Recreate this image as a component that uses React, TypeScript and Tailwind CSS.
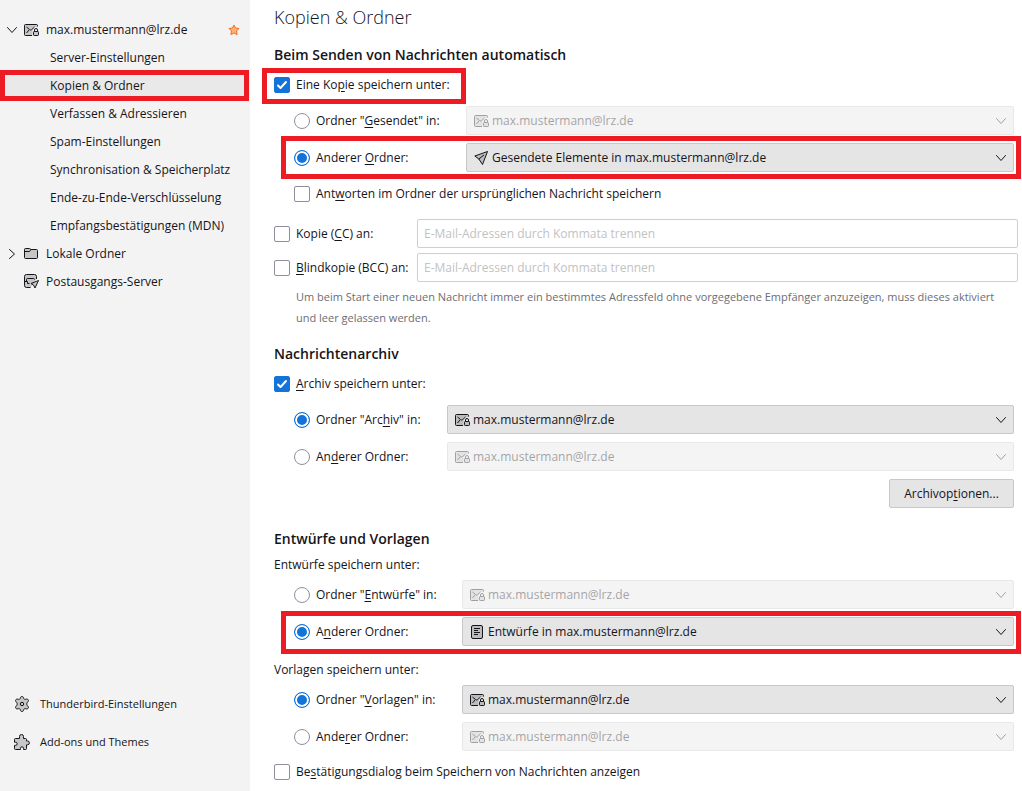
import * as React from "react"
import clsx from "clsx"

type IconProps = { className?: string }

function MailLockIcon({ className }: IconProps) {
  return (
    <svg viewBox="0 0 16 16" fill="none" stroke="currentColor" className={clsx("size-4", className)} aria-hidden="true">
      <path d="M1.500 2.500h11a1 1 0 0 1 1 1V5h-3L8.500 7v6.500h-7a1 1 0 0 1-1-1v-9a1 1 0 0 1 1-1z" fill="currentColor" fillOpacity=".2" stroke="none" />
      <path d="M8 13.500H1.500a1 1 0 0 1-1-1v-9a1 1 0 0 1 1-1h11a1 1 0 0 1 1 1v1" />
      <path d="M2.500 5l3 2.500c.8.600 1.500.600 2.300 0L10.500 5M2.500 11 5 8" />
      <rect x="9.500" y="9.500" width="5" height="4" rx=".8" fill="currentColor" fillOpacity=".2" />
      <path d="M10.500 9.500V8a1.500 1.500 0 0 1 3 0v1.500" />
    </svg>
  )
}

function FolderIcon({ className }: IconProps) {
  return (
    <svg viewBox="0 0 16 16" fill="none" stroke="currentColor" className={clsx("size-4", className)} aria-hidden="true">
      <path
        d="M.5 3.500a1 1 0 0 1 1-1h4l1.500 1h5.500a1 1 0 0 1 1 1v7a1 1 0 0 1-1 1h-11a1 1 0 0 1-1-1z"
        fill="currentColor"
        fillOpacity=".2"
      />
      <path d="M.5 5.500h5l1.500-2" />
    </svg>
  )
}

function OutgoingIcon({ className }: IconProps) {
  return (
    <svg viewBox="0 0 16 16" fill="none" stroke="currentColor" strokeLinejoin="round" className={clsx("size-4", className)} aria-hidden="true">
      <path d="M6.500 13.500h-4a2 2 0 0 1-2-2v-9a2 2 0 0 1 2-2h8a2 2 0 0 1 2 2V5" fill="currentColor" fillOpacity=".2" />
      <path d="M2.500 7V5.500a1 1 0 0 1 1-1h6a1 1 0 0 1 1 1M.5 7.500h3v2h2" />
      <path d="M14.500 6.500l-7.500 3 2.500 1.500 1.500 3z" fill="currentColor" fillOpacity=".2" />
    </svg>
  )
}

function PlaneIcon({ className }: IconProps) {
  return (
    <svg viewBox="0 0 16 16" fill="none" stroke="currentColor" strokeLinejoin="round" className={clsx("size-4", className)} aria-hidden="true">
      <path d="M13.500 1.500.8 6l4 3 3.700 5.500z" fill="currentColor" fillOpacity=".2" />
      <path d="M4.800 9 10 5" />
    </svg>
  )
}

function DraftIcon({ className }: IconProps) {
  return (
    <svg viewBox="0 0 16 16" fill="none" stroke="currentColor" className={clsx("size-4", className)} aria-hidden="true">
      <rect x="1.500" y="1.500" width="11" height="13" rx="1.500" fill="currentColor" fillOpacity=".2" />
      <path d="M4 4.500h6M4 6.500h4M4 8.500h6M4 10.500h4" />
    </svg>
  )
}

function GearIcon({ className }: IconProps) {
  return (
    <svg viewBox="0 0 16 16" fill="none" stroke="currentColor" strokeLinejoin="round" className={clsx("size-4", className)} aria-hidden="true">
      <path
        d="M6.200 2.500C6.600 1 7 .5 8 .5s1.400.500 1.800 2c.3.700.9 1 1.700.8 1.500-.4 2.200-.300 2.700.6s.2 1.500-.9 2.600c-.7.700-.7 2.300 0 3 1.100 1.100 1.400 1.700.9 2.600s-1.200 1-2.700.6c-.8-.2-1.400.1-1.700.8-.4 1.500-.8 2-1.800 2s-1.400-.5-1.800-2c-.3-.7-.9-1-1.700-.8-1.500.4-2.200.3-2.700-.6s-.2-1.500.9-2.600c.7-.7.7-2.300 0-3C1.600 5.400 1.300 4.800 1.800 3.900s1.200-1 2.700-.6c.8.200 1.400-.1 1.700-.8z"
        fill="currentColor"
        fillOpacity=".2"
      />
      <circle cx="8" cy="8" r="1.700" />
    </svg>
  )
}

function PuzzleIcon({ className }: IconProps) {
  return (
    <svg viewBox="0 0 16 16" fill="none" stroke="currentColor" strokeLinejoin="round" className={clsx("size-4", className)} aria-hidden="true">
      <path
        d="M5.500 4.500V2.500a2 2 0 1 1 4 0v2h2a1 1 0 0 1 1 1v1.500h1a1.900 1.900 0 1 1 0 3.800h-1v3.700a1 1 0 0 1-1 1H9.500v-1.200a1.500 1.500 0 0 0-3 0v1.200h-5a1 1 0 0 1-1-1v-3.200h1.200a1.500 1.500 0 1 0 0-3H.5V5.500a1 1 0 0 1 1-1z"
        fill="currentColor"
        fillOpacity=".2"
      />
    </svg>
  )
}

function StarIcon({ className }: IconProps) {
  return (
    <svg viewBox="0 0 12 12" strokeLinejoin="round" className={clsx("size-3", className)} aria-hidden="true">
      <path
        d="M6 1l1.500 3 3.500.500-2.500 2.500.600 3.600L6 9 2.900 10.600l.600-3.600L1 4.500 4.500 4z"
        fill="#ffb27a"
        stroke="#f07020"
      />
    </svg>
  )
}

function Chevron({ className }: IconProps) {
  return (
    <svg viewBox="0 0 12 12" fill="none" stroke="currentColor" strokeLinecap="round" className={clsx("size-3", className)} aria-hidden="true">
      <path d="M1.500 3.500 6 8.500l4.500-5" />
    </svg>
  )
}

function Highlight({ className }: { className: string }) {
  return <span className={clsx("pointer-events-none absolute border-5 border-[#ed1c24]", className)} />
}

// The letter after the underscore is the access key
function KeyLabel({ text }: { text: string }) {
  const [before, after] = text.split("_")
  return (
    <span>
      {before}
      <span className="underline underline-offset-2">{after.charAt(0)}</span>
      {after.slice(1)}
    </span>
  )
}

type CheckProps = { label: string; checked?: boolean; className?: string }

function Check({ label, checked, className }: CheckProps) {
  return (
    <label className={clsx("flex items-center gap-1.5 whitespace-nowrap", className)}>
      <span className="grid">
        <input
          type="checkbox"
          defaultChecked={checked}
          className="peer col-start-1 row-start-1 size-4 appearance-none rounded-xs border border-[#8f8f9d] bg-white checked:border-[#1373d9] checked:bg-[#1373d9]"
        />
        <svg
          viewBox="0 0 16 16"
          fill="none"
          stroke="white"
          strokeWidth="2"
          strokeLinecap="round"
          strokeLinejoin="round"
          className="pointer-events-none invisible col-start-1 row-start-1 size-4 peer-checked:visible"
          aria-hidden="true"
        >
          <path d="M4 8.500l2.500 2.500L12 5" />
        </svg>
      </span>
      <KeyLabel text={label} />
    </label>
  )
}

type FolderRowProps = {
  group: string
  label: string
  value: string
  selected?: boolean
  columns: string
  icon?: React.ReactNode
  highlight?: string
}

function FolderRow({ group, label, value, selected, columns, icon, highlight }: FolderRowProps) {
  return (
    <div className={clsx("relative mr-2 ml-5 grid items-center", columns)}>
      <label className="flex items-center gap-1.5 whitespace-nowrap">
        <input
          type="radio"
          name={group}
          defaultChecked={selected}
          className="size-4 appearance-none rounded-full border border-[#8f8f9d] bg-white checked:border-[#1373d9] checked:bg-[#1373d9] checked:shadow-[inset_0_0_0_2px_#fff]"
        />
        <KeyLabel text={label} />
      </label>
      <div className={clsx("relative", !selected && "opacity-40")}>
        <select
          aria-label={label.replace("_", "")}
          disabled={!selected}
          className="block h-[29px] w-full appearance-none rounded-xs border border-[#c8c8ca] bg-[#e5e5e5] pt-px pr-8 pl-[25px] opacity-100"
        >
          <option>{value}</option>
        </select>
        <span className="pointer-events-none absolute inset-y-0 left-2 flex items-center">
          {icon ?? <MailLockIcon />}
        </span>
        <Chevron className="pointer-events-none absolute inset-y-0 right-[7px] my-auto" />
      </div>
      {highlight && <Highlight className={highlight} />}
    </div>
  )
}

function AddressRow({ label, name }: { label: string; name: string }) {
  return (
    <div className="mr-1 grid grid-cols-[143px_1fr] items-center">
      <Check label={label} />
      <input
        type="text"
        aria-label={name}
        placeholder="E-Mail-Adressen durch Kommata trennen"
        className="h-[29px] w-full rounded-xs border border-[#cfcfd1] bg-white px-1.5 placeholder:text-[#c2c2c4]"
      />
    </div>
  )
}

const accountPages = [
  "Server-Einstellungen",
  "Kopien & Ordner",
  "Verfassen & Adressieren",
  "Spam-Einstellungen",
  "Synchronisation & Speicherplatz",
  "Ende-zu-Ende-Verschlüsselung",
  "Empfangsbestätigungen (MDN)",
]

function Sidebar() {
  return (
    <nav className="flex w-[250px] shrink-0 flex-col bg-[#f3f3f3] pt-4 pb-[30px]">
      <div className="flex h-7 items-center pr-[10px] pl-1.5">
        <Chevron />
        <MailLockIcon className="ml-1.5" />
        <a href="#konto" className="ml-1.5 flex-1">max.mustermann@lrz.de</a>
        <StarIcon />
      </div>
      <ul>
        {accountPages.map((page) => (
          <li
            key={page}
            className={clsx("relative flex h-7 items-center pl-[50px] whitespace-nowrap", page === "Kopien & Ordner" && "bg-[#e9e9e9]")}
          >
            <a href="#seite">{page}</a>
            {page === "Kopien & Ordner" && <Highlight className="-top-0.5 right-px -bottom-px left-0" />}
          </li>
        ))}
      </ul>
      <div className="flex h-7 items-center pl-1.5">
        <Chevron className="-rotate-90" />
        <FolderIcon className="ml-1.5" />
        <a href="#lokal" className="ml-1.5">Lokale Ordner</a>
      </div>
      <div className="flex h-7 items-center pl-6">
        <OutgoingIcon />
        <a href="#smtp" className="ml-1.5">Postausgangs-Server</a>
      </div>
      <div className="mt-auto pl-3.5 text-[11px]">
        <a href="#einstellungen" className="flex h-[38px] items-center gap-2.5">
          <GearIcon />
          Thunderbird-Einstellungen
        </a>
        <a href="#addons" className="flex h-[38px] items-center gap-2.5">
          <PuzzleIcon />
          Add-ons und Themes
        </a>
      </div>
    </nav>
  )
}

const mail = "max.mustermann@lrz.de"

export default function App() {
  return (
    <div className="flex min-h-screen bg-white font-['Open_Sans','Noto_Sans',sans-serif] text-xs leading-5 text-[#15141a]">
      <Sidebar />
      <main className="min-w-0 flex-1 pl-6">
        <h1 className="pt-[3px] text-lg leading-7 font-light">Kopien &amp; Ordner</h1>

        <section className="pt-3.5">
          <h2 className="text-sm leading-5 font-semibold">Beim Senden von Nachrichten automatisch</h2>
          <div className="relative mt-2.5 w-fit">
            <Check label="Eine Ko_pie speichern unter:" checked />
            <Highlight className="-top-[7px] -right-4 -bottom-[9px] -left-3" />
          </div>
          <div className="mt-[11px] flex flex-col gap-2">
            <FolderRow group="fcc" label={'Ordner "_Gesendet" in:'} value={mail} columns="grid-cols-[172px_1fr]" />
            <FolderRow
              group="fcc"
              label="Anderer _Ordner:"
              value="Gesendete Elemente in max.mustermann@lrz.de"
              selected
              columns="grid-cols-[172px_1fr]"
              icon={<PlaneIcon />}
              highlight="-top-[7px] -right-[7px] -bottom-[7px] -left-[13px]"
            />
          </div>
          <Check label="Ant_worten im Ordner der ursprünglichen Nachricht speichern" className="mt-3 ml-5" />
          <div className="mt-[15px] flex flex-col gap-[5px]">
            <AddressRow label="Kopie (_CC) an:" name="CC-Adressen" />
            <AddressRow label="_Blindkopie (BCC) an:" name="BCC-Adressen" />
          </div>
          <p className="mt-1 mr-3 ml-[22px] text-[11px] leading-[21px] text-[#6d6d73]">
            Um beim Start einer neuen Nachricht immer ein bestimmtes Adressfeld ohne vorgegebene Empfänger anzuzeigen,
            muss dieses aktiviert und leer gelassen werden.
          </p>
        </section>

        <section className="pt-4">
          <h2 className="text-sm leading-5 font-semibold">Nachrichtenarchiv</h2>
          <Check label="_Archiv speichern unter:" checked className="mt-2.5" />
          <div className="mt-[11px] flex flex-col gap-2">
            <FolderRow group="archive" label={'Ordner "Arc_hiv" in:'} value={mail} selected columns="grid-cols-[153px_1fr]" />
            <FolderRow group="archive" label="An_derer Ordner:" value={mail} columns="grid-cols-[153px_1fr]" />
          </div>
          <div className="mt-2 mr-2 flex justify-end">
            <button className="h-[29px] min-w-[125px] rounded-xs border border-[#c8c8ca] bg-[#e5e5e5] px-3">
              <KeyLabel text="Archivop_tionen..." />
            </button>
          </div>
        </section>

        <section className="pt-[21px]">
          <h2 className="text-sm leading-5 font-semibold">Entwürfe und Vorlagen</h2>
          <p className="mt-1.5">Entwürfe speichern unter:</p>
          <div className="mt-[5px] flex flex-col gap-2">
            <FolderRow group="drafts" label={'Ordner "_Entwürfe" in:'} value={mail} columns="grid-cols-[168px_1fr]" />
            <FolderRow
              group="drafts"
              label="A_nderer Ordner:"
              value="Entwürfe in max.mustermann@lrz.de"
              selected
              columns="grid-cols-[168px_1fr]"
              icon={<DraftIcon />}
              highlight="-top-[6px] -right-[7px] -bottom-2 -left-[13px]"
            />
          </div>
          <p className="mt-3.5">Vorlagen speichern unter:</p>
          <div className="mt-[5px] flex flex-col gap-2">
            <FolderRow group="templates" label={'Ordner "_Vorlagen" in:'} value={mail} selected columns="grid-cols-[168px_1fr]" />
            <FolderRow group="templates" label="Ande_rer Ordner:" value={mail} columns="grid-cols-[168px_1fr]" />
          </div>
          <Check label="Be_stätigungsdialog beim Speichern von Nachrichten anzeigen" className="mt-[11px]" />
        </section>
      </main>
    </div>
  )
}
